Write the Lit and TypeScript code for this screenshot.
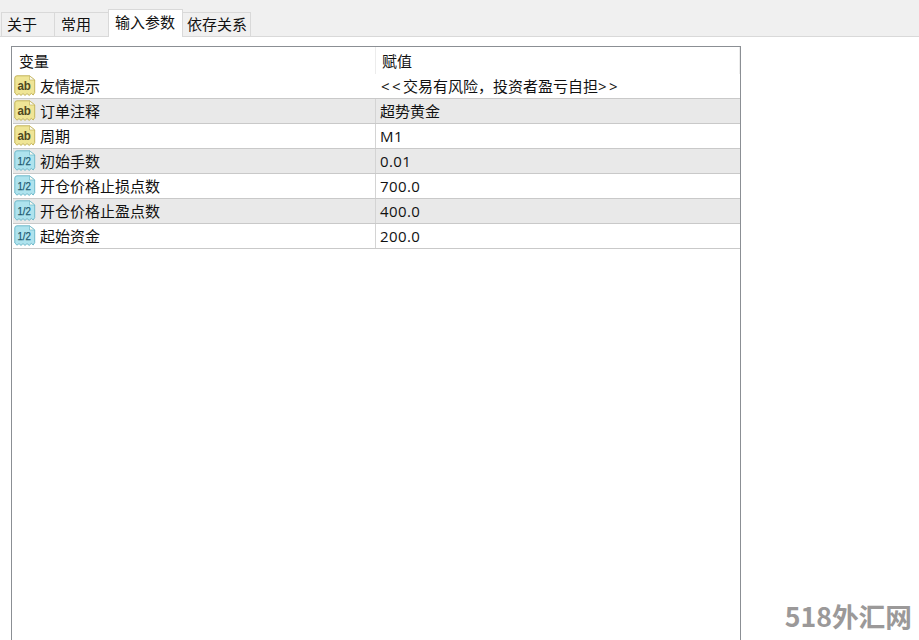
import { LitElement, html, css, svg } from "lit";
import { customElement } from "lit/decorators.js";

const rows = [
  { icon: "ab", name: "友情提示", value: html`<span class="ang">&lt;&lt;</span>交易有风险，投资者盈亏自担<span class="ang">&gt;&gt;</span>`, cls: "wide" },
  { icon: "ab", name: "订单注释", value: "超势黄金", cls: "cjk" },
  { icon: "ab", name: "周期", value: "M1", cls: "" },
  { icon: "n", name: "初始手数", value: "0.01", cls: "" },
  { icon: "n", name: "开仓价格止损点数", value: "700.0", cls: "" },
  { icon: "n", name: "开仓价格止盈点数", value: "400.0", cls: "" },
  { icon: "n", name: "起始资金", value: "200.0", cls: "" },
];

const tabs = [
  { label: "关于", cls: "w1" },
  { label: "常用", cls: "w1" },
  { label: "输入参数", cls: "active" },
  { label: "依存关系", cls: "w3" },
];

const tagShape = "M0.8 3 Q0.8 0.8 3 0.8 H15.5 L20.7 5 V17.6 L19.2 20 L17.3 18.4 L15.2 20.4 L13 18.6 L11 20.4 L9 18.6 L7 20.4 L5 18.6 L3 20.2 L0.8 18 Z";

function icon(kind: string) {
  const ab = kind === "ab";
  const fill = ab ? "#efe596" : "#aee3ee";
  const edge = ab ? "#c4b45c" : "#6fb9ca";
  const ink = ab ? "#4f4822" : "#1d5a70";
  return html`<svg class="icon" width="22" height="22" viewBox="0 0 22 22">
    ${svg`<path d=${tagShape} fill=${fill} stroke=${edge} stroke-width="1"></path>
    <path d="M15.5 0.8 V5 H20.7 Z" fill="#fbfbf4" stroke=${edge} stroke-width="0.7"></path>
    <text x="3.4" y="14.5" font-family="Liberation Sans, sans-serif" font-weight=${ab ? 700 : 400} font-size=${ab ? 12.5 : 11.5} fill=${ink} stroke=${ab ? "none" : ink} stroke-width="0.25" textLength="13.5" lengthAdjust="spacingAndGlyphs">${ab ? "ab" : "1/2"}</text>`}
  </svg>`;
}

@customElement("app-root")
export class AppRoot extends LitElement {
  static styles = css`
    :host {
      display: block;
      position: relative;
      width: 919px;
      height: 640px;
      overflow: hidden;
      background: #fff;
      font-family: "Noto Sans CJK SC", sans-serif;
      font-size: 15px;
      color: #111;
    }
    .tabbar {
      height: 36px;
      box-sizing: content-box;
      background: #f0f0f0;
      border-bottom: 1px solid #d9d9d9;
      display: flex;
      align-items: flex-end;
      padding-left: 1px;
    }
    .tab {
      height: 24px;
      box-sizing: border-box;
      border: 1px solid #d9d9d9;
      border-bottom: none;
      border-left: none;
      display: flex;
      align-items: center;
      line-height: 20px;
      padding-bottom: 2px;
      white-space: nowrap;
    }
    .tab:first-child { border-left: 1px solid #d9d9d9; }
    .w1 { width: 54px; padding-left: 5px; }
    .tab.w1 + .tab.w1 { padding-left: 6px; }
    .w3 { width: 68px; padding-left: 4px; }
    .active {
      width: 75px;
      height: 28px;
      margin-bottom: -1px;
      padding-left: 6px;
      padding-bottom: 3px;
      background: #fff;
      border-left: 1px solid #d9d9d9;
      border-top: 1px solid #d9d9d9;
      margin-left: -1px;
      position: relative;
    }
    .grid {
      margin: 9px 0 0 11px;
      width: 730px;
      height: 620px;
      box-sizing: border-box;
      border: 1px solid #8b8f94;
      border-bottom: none;
      padding-left: 1px;
    }
    .row {
      display: grid;
      grid-template-columns: 362px 1fr;
      height: 25px;
      box-sizing: border-box;
      border-bottom: 1px solid #c9c9c9;
      align-items: center;
    }
    .row.head {
      height: 27px;
      border-bottom: none;
    }
    .row.even { background: #e9e9e9; }
    .head .c1 { padding-left: 6px; padding-bottom: 1px; box-sizing: border-box; }
    .head .c2 {
      padding-left: 6px;
      padding-bottom: 1px;
      letter-spacing: 0;
      font-family: "Noto Sans CJK SC", sans-serif;
      border-left: 1px solid #ececec;
      border-right: 1px solid #ececec;
    }
    .c1 {
      display: flex;
      align-items: center;
      height: 100%;
      box-sizing: border-box;
      padding-bottom: 1px;
      white-space: nowrap;
    }
    .icon { margin: 0 4px 0 1px; flex: none; }
    .c2 {
      height: 100%;
      display: flex;
      align-items: center;
      box-sizing: border-box;
      padding-left: 4px;
      padding-bottom: 1px;
      border-left: 1px solid #d4d4d4;
      white-space: nowrap;
      font-family: "Open Sans", "Noto Sans CJK SC", sans-serif;
      font-size: 15px;
      letter-spacing: 0.4px;
    }
    .first .c2 { border-left-color: #fff; }
    .cjk { letter-spacing: 0; }
    .wide { letter-spacing: 0; padding-left: 5px; }
    .ang { letter-spacing: 2.4px; }
    .mark {
      position: absolute;
      right: 7px;
      bottom: 8px;
      color: #9b9999;
      font-family: "Noto Sans CJK SC", sans-serif;
      font-weight: 700;
      font-size: 26.7px;
      line-height: 32px;
      white-space: nowrap;
    }
  `;

  render() {
    return html`
      <div class="tabbar">
        ${tabs.map((t) => html`<div class="tab ${t.cls}">${t.label}</div>`)}
      </div>
      <div class="grid">
        <div class="row head"><div class="c1">变量</div><div class="c2">赋值</div></div>
        ${rows.map(
          (r, i) => html`<div class="row ${i % 2 ? "even" : ""} ${i === 0 ? "first" : ""}">
            <div class="c1">${icon(r.icon)}<span>${r.name}</span></div>
            <div class="c2 ${r.cls}">${r.value}</div>
          </div>`
        )}
      </div>
      <div class="mark">518外汇网</div>
    `;
  }
}
